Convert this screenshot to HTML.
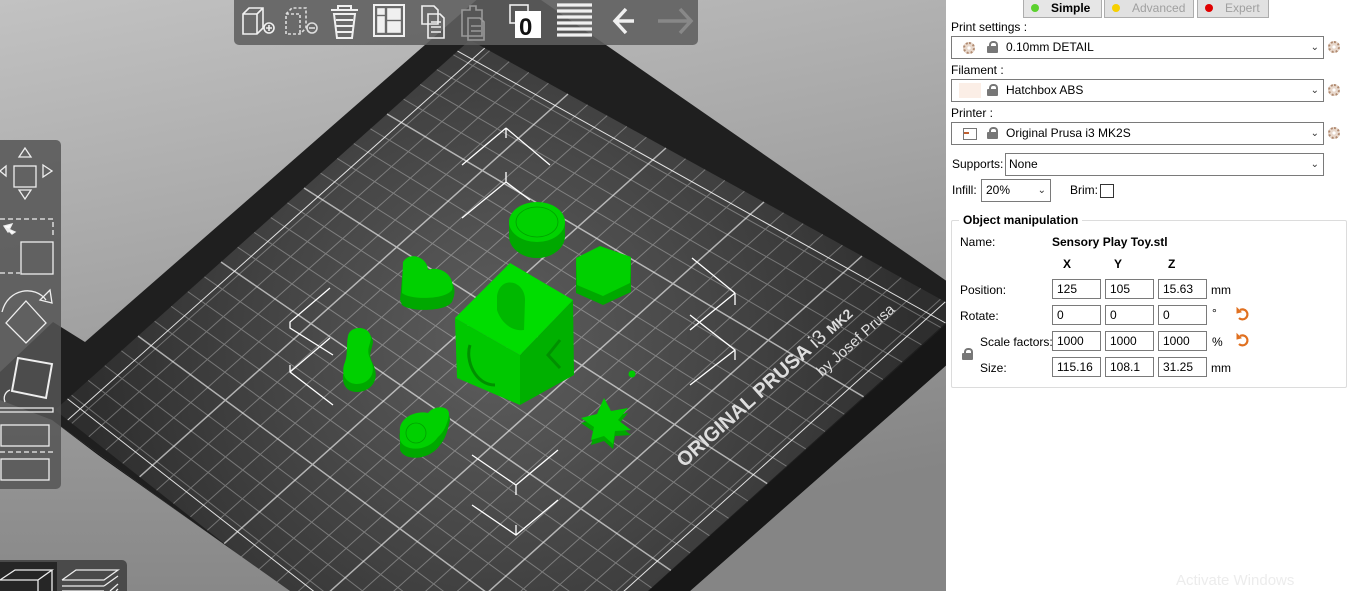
<!DOCTYPE html>
<html><head><meta charset="utf-8"><style>
body{margin:0;width:1350px;height:591px;overflow:hidden;font-family:"Liberation Sans",Tahoma,sans-serif;font-size:12px;position:relative;background:#fff}
#vp{position:absolute;left:0;top:0;width:946px;height:591px;overflow:hidden}
#panel{position:absolute;left:946px;top:0;width:404px;height:591px;background:#fff;color:#000;overflow:hidden}
.a{position:absolute}
.tab{position:absolute;top:0;height:17px;background:#e1e1e1;border:1px solid #adadad;border-top:none;font-size:12px;line-height:16px}
.dot{display:inline-block;width:8px;height:8px;border-radius:50%;vertical-align:middle;margin:0 12px 2px 7px}
.combo{position:absolute;border:1px solid #7a7a7a;height:21px;background:#fff;line-height:21px}
.chev{position:absolute;right:4px;top:0;font-size:10px;color:#333}
.gear{position:absolute;width:12px;height:12px;border-radius:50%;border:2px dotted #b08a70;box-sizing:border-box;background:radial-gradient(circle,#fff 30%,#e8d8cc 31%)}
.lock{position:absolute;width:11px;height:12px}
.lock:before{content:"";position:absolute;left:2px;top:0;width:5px;height:5px;border:2px solid #777;border-bottom:none;border-radius:4px 4px 0 0}
.lock:after{content:"";position:absolute;left:0;top:5px;width:11px;height:7px;background:#777;border-radius:1px}
.in{position:absolute;height:20px;border:1px solid #7a7a7a;box-sizing:border-box;width:49px;line-height:18px;padding-left:4px}
</style></head><body>
<div id="vp">
<svg width="946" height="591" viewBox="0 0 946 591">
<defs>
<linearGradient id="bg" x1="0" y1="0" x2="0.3" y2="1"><stop offset="0" stop-color="#c2c2c2"/><stop offset="1" stop-color="#858585"/></linearGradient>
<linearGradient id="bg2" gradientUnits="userSpaceOnUse" x1="0" y1="400" x2="0" y2="591"><stop offset="0" stop-color="#9a9a9a"/><stop offset="1" stop-color="#888"/></linearGradient>
<radialGradient id="sf" cx="500" cy="340" r="420" gradientUnits="userSpaceOnUse"><stop offset="0" stop-color="#5e5e5e"/><stop offset="1" stop-color="#2e2e2e"/></radialGradient>
</defs>
<rect width="946" height="591" fill="url(#bg)"/>
<polygon points="0,372 53,322 85,342 505,-25 1000,318 690,591 288,591 52,420 0,400" fill="#1f1f1f"/>
<polygon points="52,420 478,744 960,312 1000,318 690,591 288,591" fill="#171717"/>
<polygon points="55,410 470,40 960,310 478,744" fill="url(#sf)"/>
<g id="grid" fill="none" stroke="#fff"></g>
<polygon points="0,402 50,421 290,591 0,591" fill="url(#bg2)"/>
<g fill="#ddd" font-family="Liberation Sans,Arial,sans-serif" font-weight="bold">
<text transform="translate(684,468) rotate(-42)" font-size="20">ORIGINAL PRUSA <tspan font-weight="normal">i3</tspan> <tspan font-size="14">MK2</tspan></text>
<text transform="translate(822,377) rotate(-42)" font-size="15" font-weight="normal">by Josef Prusa</text>
</g>
<g stroke="#fff" stroke-width="1.3" fill="none">
<path d="M506 128L462 165M506 128L550 165M506 128V138"/>
<path d="M506 172V182L462 218M506 182L530 200"/>
<path d="M330 288L290 322V328L333 355M290 322"/>
<path d="M290 365V372L333 405M290 372L330 338"/>
<path d="M735 293L690 330M735 293V305M735 293L692 258"/>
<path d="M690 315L735 350V360M735 350L690 385"/>
<path d="M472 455L516 485L558 450M516 485V495"/>
<path d="M472 505L516 535L558 500M516 535V525"/>
</g>
<g>
<ellipse cx="537" cy="236" rx="28" ry="22" fill="#00a800"/>
<rect x="509" y="222" width="56" height="14" fill="#00a800"/>
<ellipse cx="537" cy="222" rx="28" ry="20" fill="#00d200"/>
<ellipse cx="537" cy="222" rx="21" ry="15" fill="none" stroke="#00a000" stroke-width="0.8"/>
<polygon points="600,250 631,262 631,292 603,305 576,293 576,262" fill="#00a800"/>
<polygon points="600,246 631,257 630,283 603,296 577,285 576,258" fill="#00d000"/>
<path d="M403 268C410 255 428 262 428 275C440 270 458 280 454 296L452 302C445 312 410 312 402 305L400 300Z" fill="#00a800"/>
<path d="M403 262C410 250 428 258 428 270C440 265 456 276 452 290C445 300 410 300 402 293Z" fill="#00d000"/>
<path d="M348 340C350 328 372 328 373 342C372 350 368 354 372 362C382 380 370 392 357 392C344 392 340 380 345 368C348 360 346 352 348 340Z" fill="#00a800"/>
<path d="M348 336C350 325 370 325 371 338C370 346 366 350 370 358C378 374 368 384 357 384C346 384 340 374 345 362C348 354 346 346 348 336Z" fill="#00d000"/>
<path d="M400 440C396 425 415 415 428 418C434 410 450 408 450 420C448 430 445 440 440 445C430 460 405 462 400 450Z" fill="#00a800"/>
<path d="M400 432C398 418 416 410 428 413C434 405 450 405 449 415C447 425 444 432 438 437C428 452 404 452 400 440Z" fill="#00d000"/>
<circle cx="416" cy="433" r="10" fill="none" stroke="#00a000" stroke-width="0.8"/>
<polygon points="604,398 611,411 628,408 618,420 631,430 615,431 613,444 604,436 591,440 594,427 581,418 597,414" fill="#00a800" transform="translate(0,5)"/>
<polygon points="604,398 611,411 628,408 618,420 631,430 615,431 613,444 604,436 591,440 594,427 581,418 597,414" fill="#00d000"/>
<circle cx="632" cy="374" r="3.5" fill="#00cc00"/>
<polygon points="455,318 520,355 520,405 457,378" fill="#00c800"/>
<polygon points="520,355 573,300 574,375 520,405" fill="#00b000"/>
<polygon points="510,263 573,300 520,355 455,318" fill="#00dd00"/>
<path d="M497 296C500 275 525 280 525 300L524 330C510 332 500 320 497 310Z" fill="#00b800"/>
<path d="M470 345C465 360 475 385 495 385" stroke="#009000" stroke-width="3" fill="none"/>
<path d="M560 340L548 355L560 368" stroke="#009000" stroke-width="3" fill="none"/>
</g>
</svg>
<div class="a" style="left:234px;top:0;width:464px;height:45px;background:rgba(95,95,95,0.88);border-radius:0 0 5px 5px"></div>
<svg class="a" style="left:234px;top:0" width="464" height="45" fill="none" stroke="#f0f0f0" stroke-width="1.6">
<path d="M9 14L15 8H29V28L23 34H9ZM9 14H23V34M23 14L29 8"/><circle cx="35" cy="28" r="5"/><path d="M32 28H38M35 25V31"/>
<path stroke-dasharray="3 2" stroke="#ddd" d="M52 14L58 8H72V28L66 34H52ZM52 14H66V34"/><circle cx="78" cy="28" r="5" stroke="#ddd"/><path d="M75 28H81" stroke="#ddd"/>
<path d="M97 10H124M104 10V6H117V10M100 14L103 38H118L121 14ZM102 20H119M102 26H119M103 32H118" stroke-width="2"/>
<rect x="140" y="5" width="30" height="31" stroke-width="2"/><rect x="144" y="9" width="6" height="5" fill="#f0f0f0"/><rect x="144" y="17" width="6" height="15" fill="#f0f0f0"/><rect x="154" y="9" width="12" height="10" fill="#f0f0f0"/><rect x="154" y="22" width="12" height="10" fill="#f0f0f0"/>
<path d="M188 6H200L204 10V24H188ZM194 14H206L210 18V38H194ZM197 22H207M197 27H207M197 32H207"/>
<path stroke="#999" d="M228 10H236V6H242V10H248V36H228ZM234 18H246L250 22V40H234ZM237 26H247M237 31H247"/>
<rect x="276" y="5" width="18" height="18" stroke="#eee"/><rect x="281" y="11" width="26" height="27" fill="#fff" stroke="none"/>
<text x="285" y="35" fill="#111" stroke="none" font-family="Liberation Sans" font-weight="bold" font-size="24">0</text>
<path stroke-width="3.2" d="M323 5H358M323 11H358M323 17H358M323 23H358M323 29H358M323 35H358"/>
<path stroke-width="3.5" d="M400 21H382M392 9L381 21L392 33"/>
<path stroke="#888" stroke-width="3.5" d="M424 21H456M446 9L457 21L446 33"/>
</svg>
<div class="a" style="left:0;top:140px;width:61px;height:349px;background:rgba(85,85,85,0.85);border-radius:0 5px 5px 0"></div>
<svg class="a" style="left:0;top:140px" width="61" height="349" fill="none" stroke="#eee" stroke-width="1.3">
<path d="M25 8L19 17H31ZM25 59L19 50H31ZM0 31L6 26V36ZM43 25L52 31L43 37Z"/><rect x="14" y="26" width="22" height="21"/>
<path stroke-dasharray="5 3" d="M0 79H53V95M0 133H20"/><rect x="21" y="102" width="32" height="32"/><path d="M6 88L12 94L15 92ZM4 86L12 84L8 92Z" fill="#fff"/>
<path d="M2 172C8 148 35 145 46 160"/><path d="M40 160L52 163L50 150Z"/><path d="M26 161L46 183L26 203L6 183Z"/>
<path d="M18 218L52 224L46 258L12 251Z" stroke-width="2"/><path d="M10 250C5 252 3 257 5 262"/>
<path d="M0 268H53V272H0"/><rect x="1" y="285" width="48" height="21"/><path stroke-dasharray="5 3" d="M0 312H53"/><rect x="1" y="319" width="48" height="21"/>
</svg>
<div class="a" style="left:0;top:560px;width:127px;height:31px;background:#4a4a4a;border-radius:0 5px 0 0"></div>
<div class="a" style="left:0;top:562px;width:57px;height:29px;background:#262626"></div>
<svg class="a" style="left:0;top:560px" width="127" height="31" fill="none" stroke="#eee" stroke-width="1.3">
<path d="M0 20L15 10H52L38 20H0M38 20V31M52 10V31"/>
<path d="M62 20L76 10H118L104 20H62M62 26H104M62 31H104M104 20L118 10M104 26L118 16M110 31L118 24M116 31L118 29"/>
</svg>
</div>
<div id="panel">
<div class="tab" style="left:77px;width:77px;font-weight:bold;background:#e6e6e6"><span class="dot" style="background:#5bd12e"></span>Simple</div>
<div class="tab" style="left:158px;width:88px;color:#a0a0a0"><span class="dot" style="background:#f6d000"></span>Advanced</div>
<div class="tab" style="left:251px;width:70px;color:#a0a0a0"><span class="dot" style="background:#e00000"></span>Expert</div>
<div class="a" style="left:5px;top:20px">Print settings :</div>
<div class="combo" style="left:5px;top:36px;width:371px"><div class="gear" style="left:11px;top:5px"></div><div class="lock" style="left:35px;top:4px"></div><span style="position:absolute;left:54px">0.10mm DETAIL</span><span class="chev">&#8964;</span></div>
<div class="gear" style="left:382px;top:41px"></div>
<div class="a" style="left:5px;top:63px">Filament :</div>
<div class="combo" style="left:5px;top:79px;width:371px"><div style="position:absolute;left:7px;top:3px;width:22px;height:15px;background:#fbeee6"></div><div class="lock" style="left:35px;top:4px"></div><span style="position:absolute;left:54px">Hatchbox ABS</span><span class="chev">&#8964;</span></div>
<div class="gear" style="left:382px;top:84px"></div>
<div class="a" style="left:5px;top:106px">Printer :</div>
<div class="combo" style="left:5px;top:122px;width:371px"><div style="position:absolute;left:11px;top:5px;width:12px;height:10px;border:1px solid #777;background:#fff"><div style="width:5px;height:2px;background:#c06030;margin-top:3px"></div></div><div class="lock" style="left:35px;top:4px"></div><span style="position:absolute;left:54px">Original Prusa i3 MK2S</span><span class="chev">&#8964;</span></div>
<div class="gear" style="left:382px;top:127px"></div>
<div class="a" style="left:6px;top:157px">Supports:</div>
<div class="combo" style="left:59px;top:153px;width:317px"><span style="position:absolute;left:3px">None</span><span class="chev">&#8964;</span></div>
<div class="a" style="left:6px;top:183px">Infill:</div>
<div class="combo" style="left:35px;top:179px;width:68px"><span style="position:absolute;left:4px">20%</span><span class="chev">&#8964;</span></div>
<div class="a" style="left:124px;top:183px">Brim:</div>
<div class="a" style="left:154px;top:184px;width:12px;height:12px;border:1px solid #333"></div>
<div class="a" style="left:5px;top:220px;width:394px;height:166px;border:1px solid #dcdcdc;border-radius:2px"></div>
<div class="a" style="left:13px;top:213px;background:#fff;padding:0 4px;font-weight:bold">Object manipulation</div>
<div class="a" style="left:14px;top:235px">Name:</div>
<div class="a" style="left:106px;top:235px;font-weight:bold">Sensory Play Toy.stl</div>
<div class="a" style="left:117px;top:257px;font-weight:bold">X</div>
<div class="a" style="left:168px;top:257px;font-weight:bold">Y</div>
<div class="a" style="left:222px;top:257px;font-weight:bold">Z</div>
<div class="a" style="left:14px;top:283px">Position:</div>
<div class="in" style="left:106px;top:279px">125</div><div class="in" style="left:159px;top:279px">105</div><div class="in" style="left:212px;top:279px">15.63</div><div class="a" style="left:265px;top:283px">mm</div>
<div class="a" style="left:14px;top:309px">Rotate:</div>
<div class="in" style="left:106px;top:305px">0</div><div class="in" style="left:159px;top:305px">0</div><div class="in" style="left:212px;top:305px">0</div><div class="a" style="left:266px;top:306px">°</div>
<div class="a" style="left:34px;top:335px">Scale factors:</div>
<div class="in" style="left:106px;top:331px">1000</div><div class="in" style="left:159px;top:331px">1000</div><div class="in" style="left:212px;top:331px">1000</div><div class="a" style="left:266px;top:335px">%</div>
<div class="a" style="left:34px;top:361px">Size:</div>
<div class="in" style="left:106px;top:357px">115.16</div><div class="in" style="left:159px;top:357px">108.1</div><div class="in" style="left:212px;top:357px">31.25</div><div class="a" style="left:265px;top:361px">mm</div>
<div class="lock" style="left:16px;top:348px"></div>
<svg class="a" style="left:290px;top:307px" width="14" height="50" fill="none" stroke="#e07020" stroke-width="2.2"><path d="M4 3A5 5 0 1 1 3 11"/><path d="M1 1L5 5L1 6Z" fill="#e07020" stroke-width="1"/><path d="M4 29A5 5 0 1 1 3 37"/><path d="M1 27L5 31L1 32Z" fill="#e07020" stroke-width="1"/></svg>
<div class="a" style="left:230px;top:572px;color:#ececec;font-size:15px;line-height:17px">Activate Windows</div>
</div>
<script>
(function(){
var T=[470,40],R=[960,310],B=[478,744],L=[55,410];
function P(u,v){var x=(1-u)*(1-v)*T[0]+u*(1-v)*R[0]+u*v*B[0]+(1-u)*v*L[0];
var y=(1-u)*(1-v)*T[1]+u*(1-v)*R[1]+u*v*B[1]+(1-u)*v*L[1];return x.toFixed(1)+" "+y.toFixed(1);}
var minor="",major="",edge="";
for(var i=1;i<25;i++){var t=i/25;var d="M"+P(t,0)+"L"+P(t,1)+"M"+P(0,t)+"L"+P(1,t);
if(i%5==0)major+=d;else minor+=d;}
var e=0.03;edge="M"+P(e,0)+"L"+P(e,1)+"M"+P(0,e)+"L"+P(1,e)+"M"+P(1-e,0)+"L"+P(1-e,1)+"M"+P(0,1-e)+"L"+P(1,1-e);
document.getElementById("grid").innerHTML='<path d="'+minor+'" stroke-opacity="0.3" stroke-width="1"/><path d="'+major+'" stroke-opacity="0.6" stroke-width="1.5"/><path d="'+edge+'" stroke-opacity="0.85" stroke-width="1"/>';
})();
</script>
</body></html>
